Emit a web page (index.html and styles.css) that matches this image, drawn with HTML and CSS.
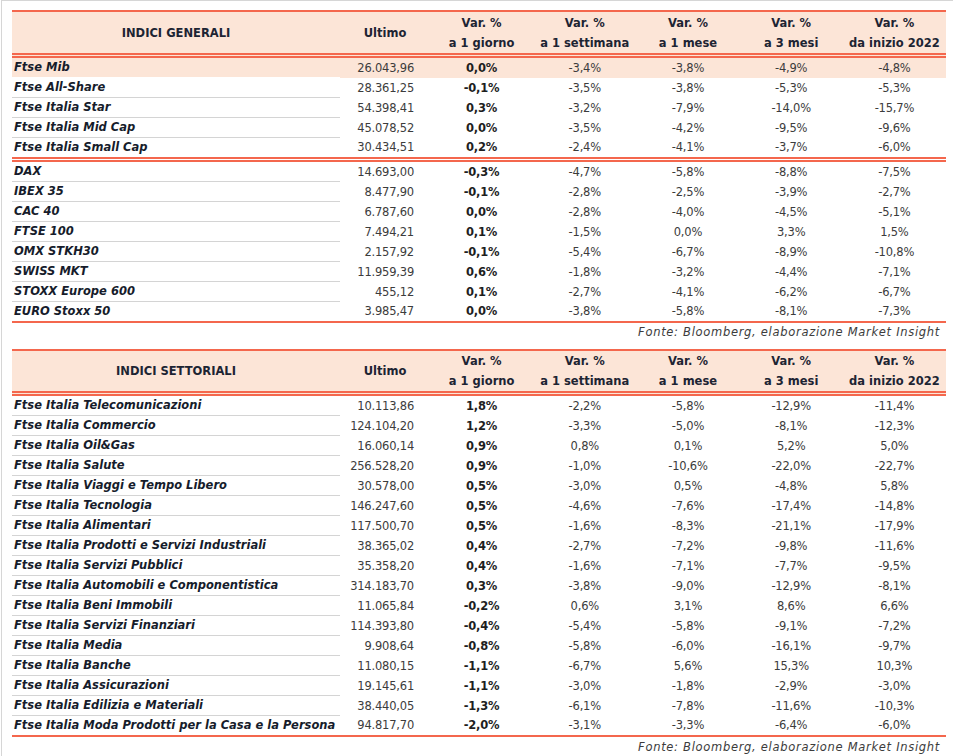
FILE: index.html
```html
<!DOCTYPE html>
<html lang="it">
<head>
<meta charset="utf-8">
<title>Indici</title>
<link rel="stylesheet" href="styles.css">
</head>
<body>
<div class="page">
  <table class="idx idx-gen">
    <colgroup><col class="c-name"><col class="c-last"><col class="c-var"><col class="c-var"><col class="c-var"><col class="c-var"><col class="c-var"></colgroup>
    <thead>
      <tr><th>INDICI GENERALI</th><th>Ultimo</th><th>Var. %<br>a 1 giorno</th><th>Var. %<br>a 1 settimana</th><th>Var. %<br>a 1 mese</th><th>Var. %<br>a 3 mesi</th><th>Var. %<br>da inizio 2022</th></tr>
    </thead>
    <tbody class="grp grp-mid">
      <tr class="hl"><td class="n">Ftse Mib</td><td class="v">26.043,96</td><td class="d">0,0%</td><td>-3,4%</td><td>-3,8%</td><td>-4,9%</td><td>-4,8%</td></tr>
      <tr><td class="n">Ftse All-Share</td><td class="v">28.361,25</td><td class="d">-0,1%</td><td>-3,5%</td><td>-3,8%</td><td>-5,3%</td><td>-5,3%</td></tr>
      <tr><td class="n">Ftse Italia Star</td><td class="v">54.398,41</td><td class="d">0,3%</td><td>-3,2%</td><td>-7,9%</td><td>-14,0%</td><td>-15,7%</td></tr>
      <tr><td class="n">Ftse Italia Mid Cap</td><td class="v">45.078,52</td><td class="d">0,0%</td><td>-3,5%</td><td>-4,2%</td><td>-9,5%</td><td>-9,6%</td></tr>
      <tr><td class="n">Ftse Italia Small Cap</td><td class="v">30.434,51</td><td class="d">0,2%</td><td>-2,4%</td><td>-4,1%</td><td>-3,7%</td><td>-6,0%</td></tr>
    </tbody>
    <tbody class="grp grp-end">
      <tr><td class="n">DAX</td><td class="v">14.693,00</td><td class="d">-0,3%</td><td>-4,7%</td><td>-5,8%</td><td>-8,8%</td><td>-7,5%</td></tr>
      <tr><td class="n">IBEX 35</td><td class="v">8.477,90</td><td class="d">-0,1%</td><td>-2,8%</td><td>-2,5%</td><td>-3,9%</td><td>-2,7%</td></tr>
      <tr><td class="n">CAC 40</td><td class="v">6.787,60</td><td class="d">0,0%</td><td>-2,8%</td><td>-4,0%</td><td>-4,5%</td><td>-5,1%</td></tr>
      <tr><td class="n">FTSE 100</td><td class="v">7.494,21</td><td class="d">0,1%</td><td>-1,5%</td><td>0,0%</td><td>3,3%</td><td>1,5%</td></tr>
      <tr><td class="n">OMX STKH30</td><td class="v">2.157,92</td><td class="d">-0,1%</td><td>-5,4%</td><td>-6,7%</td><td>-8,9%</td><td>-10,8%</td></tr>
      <tr><td class="n">SWISS MKT</td><td class="v">11.959,39</td><td class="d">0,6%</td><td>-1,8%</td><td>-3,2%</td><td>-4,4%</td><td>-7,1%</td></tr>
      <tr><td class="n">STOXX Europe 600</td><td class="v">455,12</td><td class="d">0,1%</td><td>-2,7%</td><td>-4,1%</td><td>-6,2%</td><td>-6,7%</td></tr>
      <tr><td class="n">EURO Stoxx 50</td><td class="v">3.985,47</td><td class="d">0,0%</td><td>-3,8%</td><td>-5,8%</td><td>-8,1%</td><td>-7,3%</td></tr>
    </tbody>
  </table>
  <p class="src src-1">Fonte: Bloomberg, elaborazione Market Insight</p>

  <table class="idx idx-set">
    <colgroup><col class="c-name"><col class="c-last"><col class="c-var"><col class="c-var"><col class="c-var"><col class="c-var"><col class="c-var"></colgroup>
    <thead>
      <tr><th>INDICI SETTORIALI</th><th>Ultimo</th><th>Var. %<br>a 1 giorno</th><th>Var. %<br>a 1 settimana</th><th>Var. %<br>a 1 mese</th><th>Var. %<br>a 3 mesi</th><th>Var. %<br>da inizio 2022</th></tr>
    </thead>
    <tbody class="grp grp-end">
      <tr><td class="n">Ftse Italia Telecomunicazioni</td><td class="v">10.113,86</td><td class="d">1,8%</td><td>-2,2%</td><td>-5,8%</td><td>-12,9%</td><td>-11,4%</td></tr>
      <tr><td class="n">Ftse Italia Commercio</td><td class="v">124.104,20</td><td class="d">1,2%</td><td>-3,3%</td><td>-5,0%</td><td>-8,1%</td><td>-12,3%</td></tr>
      <tr><td class="n">Ftse Italia Oil&amp;Gas</td><td class="v">16.060,14</td><td class="d">0,9%</td><td>0,8%</td><td>0,1%</td><td>5,2%</td><td>5,0%</td></tr>
      <tr><td class="n">Ftse Italia Salute</td><td class="v">256.528,20</td><td class="d">0,9%</td><td>-1,0%</td><td>-10,6%</td><td>-22,0%</td><td>-22,7%</td></tr>
      <tr><td class="n">Ftse Italia Viaggi e Tempo Libero</td><td class="v">30.578,00</td><td class="d">0,5%</td><td>-3,0%</td><td>0,5%</td><td>-4,8%</td><td>5,8%</td></tr>
      <tr><td class="n">Ftse Italia Tecnologia</td><td class="v">146.247,60</td><td class="d">0,5%</td><td>-4,6%</td><td>-7,6%</td><td>-17,4%</td><td>-14,8%</td></tr>
      <tr><td class="n">Ftse Italia Alimentari</td><td class="v">117.500,70</td><td class="d">0,5%</td><td>-1,6%</td><td>-8,3%</td><td>-21,1%</td><td>-17,9%</td></tr>
      <tr><td class="n">Ftse Italia Prodotti e Servizi Industriali</td><td class="v">38.365,02</td><td class="d">0,4%</td><td>-2,7%</td><td>-7,2%</td><td>-9,8%</td><td>-11,6%</td></tr>
      <tr><td class="n">Ftse Italia Servizi Pubblici</td><td class="v">35.358,20</td><td class="d">0,4%</td><td>-1,6%</td><td>-7,1%</td><td>-7,7%</td><td>-9,5%</td></tr>
      <tr><td class="n">Ftse Italia Automobili e Componentistica</td><td class="v">314.183,70</td><td class="d">0,3%</td><td>-3,8%</td><td>-9,0%</td><td>-12,9%</td><td>-8,1%</td></tr>
      <tr><td class="n">Ftse Italia Beni Immobili</td><td class="v">11.065,84</td><td class="d">-0,2%</td><td>0,6%</td><td>3,1%</td><td>8,6%</td><td>6,6%</td></tr>
      <tr><td class="n">Ftse Italia Servizi Finanziari</td><td class="v">114.393,80</td><td class="d">-0,4%</td><td>-5,4%</td><td>-5,8%</td><td>-9,1%</td><td>-7,2%</td></tr>
      <tr><td class="n">Ftse Italia Media</td><td class="v">9.908,64</td><td class="d">-0,8%</td><td>-5,8%</td><td>-6,0%</td><td>-16,1%</td><td>-9,7%</td></tr>
      <tr><td class="n">Ftse Italia Banche</td><td class="v">11.080,15</td><td class="d">-1,1%</td><td>-6,7%</td><td>5,6%</td><td>15,3%</td><td>10,3%</td></tr>
      <tr><td class="n">Ftse Italia Assicurazioni</td><td class="v">19.145,61</td><td class="d">-1,1%</td><td>-3,0%</td><td>-1,8%</td><td>-2,9%</td><td>-3,0%</td></tr>
      <tr><td class="n">Ftse Italia Edilizia e Materiali</td><td class="v">38.440,05</td><td class="d">-1,3%</td><td>-6,1%</td><td>-7,8%</td><td>-11,6%</td><td>-10,3%</td></tr>
      <tr><td class="n">Ftse Italia Moda Prodotti per la Casa e la Persona</td><td class="v">94.817,70</td><td class="d">-2,0%</td><td>-3,1%</td><td>-3,3%</td><td>-6,4%</td><td>-6,0%</td></tr>
    </tbody>
  </table>
  <p class="src src-2">Fonte: Bloomberg, elaborazione Market Insight</p>
</div>
</body>
</html>
```

FILE: styles.css
```css
html, body {
  margin: 0;
  padding: 0;
  background: #ffffff;
}

body {
  font-family: "DejaVu Sans", Verdana, sans-serif;
  font-size: 11.5px;
  color: #3c3c3c;
}

.page {
  margin-left: 1px;
  border-top: 1px solid #d6d6d6;
  border-left: 1px solid #d6d6d6;
  padding: 9px 0 0 10px;
  min-height: 746px;
}

.idx {
  width: 934px;
  table-layout: fixed;
  border-collapse: separate;
  border-spacing: 0;
}

.c-name { width: 328px; }
.c-last { width: 90px; }

.idx th {
  background: #fce5d7;
  border-top: 2px solid #f4674d;
  border-bottom: 5px double #f4674d;
  font-weight: bold;
  color: #1d2433;
  text-align: center;
  line-height: 20px;
  padding: 0;
  vertical-align: middle;
  white-space: nowrap;
}

.idx-gen th { padding: 1px 0 0; }

.idx td {
  padding: 0;
  line-height: 19px;
  height: 19px;
  text-align: center;
  white-space: nowrap;
  letter-spacing: -0.2px;
  color: #3c3c3c;
}

.idx td.n {
  text-align: left;
  padding-left: 2px;
  font-weight: bold;
  font-style: italic;
  color: #161c2b;
  letter-spacing: 0;
  border-bottom: 1px solid #d4d4d4;
}

.idx td.v {
  text-align: right;
  padding-right: 16px;
}

.idx td.d {
  font-weight: bold;
  color: #1e1e1e;
}

.idx tr.hl td { background: #fce5d7; }
.idx tr.hl td.n { border-bottom-color: #ffffff; }

.grp-mid tr:last-child td,
.grp-mid tr:last-child td.n {
  border-bottom: 5px double #f4674d;
}

.grp-end tr:last-child td,
.grp-end tr:last-child td.n {
  border-bottom: 2px solid #f4674d;
}

.src {
  margin: 0;
  padding-right: 6px;
  width: 928px;
  text-align: right;
  font-style: italic;
  letter-spacing: 0.7px;
  line-height: 20px;
  color: #3c3c3c;
}

.src-1 { height: 26px; line-height: 19px; }
.src-2 { line-height: 20px; }
```
